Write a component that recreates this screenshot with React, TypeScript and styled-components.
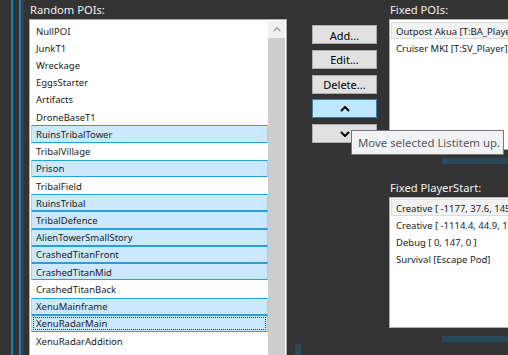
import React from "react";
import styled, { createGlobalStyle } from "styled-components";

const Global = createGlobalStyle`
  html, body { margin: 0; padding: 0; background: #333333; overflow: hidden; }
  #root { width: 508px; height: 355px; }
`;

const Page = styled.div`
  position: relative;
  width: 508px;
  height: 355px;
  overflow: hidden;
  display: flex;
  background: #333333;
  font-family: "Noto Sans", "Open Sans", sans-serif;
`;

const Rail = styled.div`
  flex: none;
  width: 29px;
  box-sizing: border-box;
  padding-left: 11px;
  display: flex;
`;

const Stripe = styled.div<{ $w: number; $color: string; $gap: number }>`
  flex: none;
  width: ${(p) => p.$w}px;
  margin-right: ${(p) => p.$gap}px;
  background: ${(p) => p.$color};
`;

const Column = styled.div<{ $w: number }>`
  flex: none;
  width: ${(p) => p.$w}px;
  display: flex;
  flex-direction: column;
`;

const Title = styled.div<{ $mt?: number }>`
  flex: none;
  height: 19px;
  margin-top: ${(p) => p.$mt ?? 0}px;
  line-height: 19px;
  font-size: 11.2px;
  color: #f2f2f2;
  padding-left: 1px;
  white-space: nowrap;
`;

const ListBox = styled.div<{ $h: number; $w?: number }>`
  flex: none;
  box-sizing: border-box;
  height: ${(p) => p.$h}px;
  width: ${(p) => (p.$w ? `${p.$w}px` : "auto")};
  background: #ffffff;
  border: 1px solid #adadad;
  display: flex;
  overflow: hidden;
`;

const Items = styled.div<{ $pt: number }>`
  flex: 1;
  min-width: 0;
  box-sizing: border-box;
  padding: ${(p) => p.$pt}px 0 0 1px;
  display: flex;
  flex-direction: column;
`;

const Row = styled.div<{ $sel?: boolean; $focus?: boolean; $hot?: boolean }>`
  position: relative;
  flex: none;
  box-sizing: border-box;
  height: 17.22px;
  padding-left: 4px;
  display: flex;
  align-items: center;
  font-size: 9.5px;
  color: #1a1a1a;
  white-space: nowrap;
  overflow: hidden;
  border: 1px solid transparent;
  ${(p) =>
    p.$sel &&
    `
    background: #cce8ff;
    border-color: #26a0da #99d1ff #26a0da #99d1ff;
  `}
  ${(p) =>
    p.$hot &&
    `
    background: #f2f2f2;
    border-color: #dadada;
  `}
  ${(p) =>
    p.$focus &&
    `
    &::after {
      content: "";
      position: absolute;
      inset: 1px;
      border: 1px dotted #333;
    }
  `}
`;

const RowText = styled.span`
  padding-top: 1px;
`;

const ScrollBar = styled.div`
  flex: none;
  width: 17px;
  margin: 1px 1px 0 0;
  display: flex;
  flex-direction: column;
`;

const ScrollArrow = styled.div`
  flex: none;
  height: 17px;
  background: #f0f0f0;
  display: flex;
  align-items: center;
  justify-content: center;
`;

const ScrollThumb = styled.div`
  flex: 1;
  background: #cdcdcd;
`;

const ButtonCol = styled.div`
  flex: none;
  width: 102px;
  box-sizing: border-box;
  padding: 25px 0 0 25px;
  display: flex;
  flex-direction: column;
  gap: 5.75px;
`;

const Button = styled.div<{ $hot?: boolean }>`
  flex: none;
  box-sizing: border-box;
  width: 65px;
  height: 19px;
  background: ${(p) => (p.$hot ? "#bee6fd" : "#e1e1e1")};
  border: 1px solid ${(p) => (p.$hot ? "#3c7fb1" : "#adadad")};
  color: #000;
  font-size: 11px;
  display: flex;
  align-items: center;
  justify-content: center;
  padding-top: 1px;
`;

const Mark = styled.div`
  flex: none;
  margin-top: auto;
  margin-left: -17px;
  width: 6px;
  height: 11px;
  background: #27485a;
`;

const TealBar = styled.div`
  flex: none;
  margin: 8px 0 0 53px;
  height: 6px;
  width: 90px;
  background: #27485a;
`;

const Tooltip = styled.div`
  position: absolute;
  left: 351px;
  top: 130px;
  width: 153px;
  height: 25px;
  box-sizing: border-box;
  background: #f1f2f6;
  border: 1px solid #767676;
  color: #575757;
  font-size: 11.4px;
  padding-left: 6px;
  display: flex;
  align-items: center;
  white-space: nowrap;
`;

const Chevron = ({ up, color, w, h, sw }: { up: boolean; color: string; w: number; h: number; sw: number }) => (
  <svg width={w} height={h} viewBox={`0 0 ${w} ${h}`} style={{ display: "block" }}>
    <polyline
      points={
        up
          ? `${sw / 2},${h - sw / 2} ${w / 2},${sw / 2} ${w - sw / 2},${h - sw / 2}`
          : `${sw / 2},${sw / 2} ${w / 2},${h - sw / 2} ${w - sw / 2},${sw / 2}`
      }
      fill="none"
      stroke={color}
      strokeWidth={sw}
    />
  </svg>
);

const randomPois: { t: string; s?: boolean; f?: boolean }[] = [
  { t: "NullPOI" },
  { t: "JunkT1" },
  { t: "Wreckage" },
  { t: "EggsStarter" },
  { t: "Artifacts" },
  { t: "DroneBaseT1" },
  { t: "RuinsTribalTower", s: true },
  { t: "TribalVillage" },
  { t: "Prison", s: true },
  { t: "TribalField" },
  { t: "RuinsTribal", s: true },
  { t: "TribalDefence", s: true },
  { t: "AlienTowerSmallStory", s: true },
  { t: "CrashedTitanFront", s: true },
  { t: "CrashedTitanMid", s: true },
  { t: "CrashedTitanBack" },
  { t: "XenuMainframe", s: true },
  { t: "XenuRadarMain", s: true, f: true },
  { t: "XenuRadarAddition" },
];

const fixedPois = ["Outpost Akua [T:BA_Player]", "Cruiser MKI [T:SV_Player][Akua]"];
const playerStarts = [
  "Creative [ -1177, 37.6, 1452.3 ]",
  "Creative [ -1114.4, 44.9, 1475.2 ]",
  "Debug [ 0, 147, 0 ]",
  "Survival [Escape Pod]",
];

export default function App() {
  return (
    <>
      <Global />
      <Page>
        <Rail>
          <Stripe $w={2} $gap={6} $color="#1b7fb4" />
          <Stripe $w={2} $gap={1} $color="#1b86bf" />
          <Stripe $w={1} $gap={0} $color="#4a4a4a" />
        </Rail>
        <Column $w={258}>
          <Title>Random POIs:</Title>
          <ListBox $h={360}>
            <Items $pt={2}>
              {randomPois.map((r) => (
                <Row key={r.t} $sel={r.s} $focus={r.f}>
                  <RowText>{r.t}</RowText>
                </Row>
              ))}
            </Items>
            <ScrollBar>
              <ScrollArrow>
                <Chevron up color="#a3a3a3" w={8} h={5} sw={1.4} />
              </ScrollArrow>
              <ScrollThumb />
            </ScrollBar>
          </ListBox>
        </Column>
        <ButtonCol>
          <Button>Add...</Button>
          <Button>Edit...</Button>
          <Button>Delete...</Button>
          <Button $hot>
            <Chevron up color="#000" w={10} h={6} sw={2} />
          </Button>
          <Button>
            <Chevron up={false} color="#000" w={10} h={6} sw={2} />
          </Button>
          <Mark />
        </ButtonCol>
        <Column $w={160}>
          <Title>Fixed POIs:</Title>
          <ListBox $h={131} $w={160}>
            <Items $pt={2}>
              {fixedPois.map((t, i) => (
                <Row key={t} $hot={i === 0}>
                  <RowText>{t}</RowText>
                </Row>
              ))}
            </Items>
          </ListBox>
          <TealBar />
          <Title $mt={14}>Fixed PlayerStart:</Title>
          <ListBox $h={131} $w={160}>
            <Items $pt={1}>
              {playerStarts.map((t, i) => (
                <Row key={t} $hot={i === 0}>
                  <RowText>{t}</RowText>
                </Row>
              ))}
            </Items>
          </ListBox>
          <TealBar />
        </Column>
        <Tooltip>Move selected Listitem up.</Tooltip>
      </Page>
    </>
  );
}
